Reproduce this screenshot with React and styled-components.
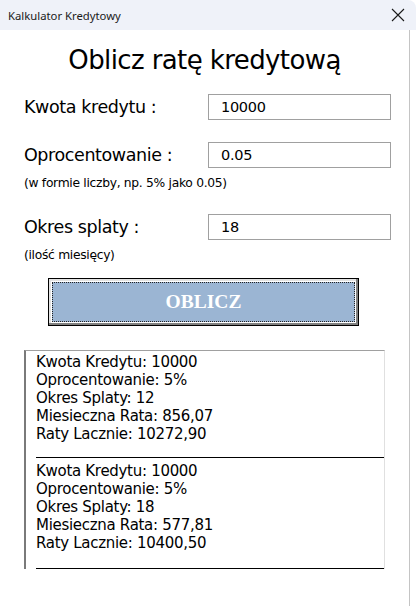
import React from 'react';
import styled, { createGlobalStyle } from 'styled-components';

const GlobalStyle = createGlobalStyle`
  html, body {
    margin: 0;
    padding: 0;
    background: #ffffff;
  }
  * {
    box-sizing: border-box;
  }
`;

const results = [
  { kwota: '10000', procent: '5%', okres: '12', rata: '856,07', lacznie: '10272,90' },
  { kwota: '10000', procent: '5%', okres: '18', rata: '577,81', lacznie: '10400,50' },
];

function App() {
  return (
    <>
      <GlobalStyle />
      <Window>
        <TitleBar>
          <TitleText>Kalkulator Kredytowy</TitleText>
          <CloseButton aria-label="close">
            <svg width="14" height="14" viewBox="0 0 14 14">
              <path d="M1 1 L13 13 M13 1 L1 13" stroke="#1a1a1a" strokeWidth="1.1" fill="none" />
            </svg>
          </CloseButton>
        </TitleBar>
        <Form>
          <Heading>Oblicz ratę kredytową</Heading>

          <Row $top={17}>
            <Label>Kwota kredytu :</Label>
            <Field defaultValue="10000" />
          </Row>

          <Row $top={22}>
            <Label>Oprocentowanie :</Label>
            <Field defaultValue="0.05" />
          </Row>
          <Hint>(w formie liczby, np. 5% jako 0.05)</Hint>

          <Row $top={23}>
            <Label>Okres splaty :</Label>
            <Field defaultValue="18" />
          </Row>
          <Hint>(ilość miesięcy)</Hint>

          <CalcButton>
            <CalcInner>OBLICZ</CalcInner>
          </CalcButton>

          <Results>
            {results.map((r, i) => (
              <Block key={i}>
                <Line>Kwota Kredytu: {r.kwota}</Line>
                <Line>Oprocentowanie: {r.procent}</Line>
                <Line>Okres Splaty: {r.okres}</Line>
                <Line>Miesieczna Rata: {r.rata}</Line>
                <Line>Raty Lacznie: {r.lacznie}</Line>
              </Block>
            ))}
          </Results>
        </Form>
      </Window>
    </>
  );
}

const Window = styled.div`
  width: 416px;
  height: 606px;
  background: #ffffff;
  display: flex;
  flex-direction: column;
  overflow: hidden;
`;

const TitleBar = styled.div`
  height: 30px;
  background: #eff2f9;
  border-top-right-radius: 8px;
  display: flex;
  align-items: center;
  justify-content: space-between;
  padding: 0 10px 0 8px;
`;

const TitleText = styled.span`
  font-family: "Noto Sans", "Open Sans", sans-serif;
  font-size: 11.3px;
  color: #1a1a1a;
`;

const CloseButton = styled.div`
  width: 16px;
  height: 16px;
  display: flex;
  align-items: center;
  justify-content: center;
`;

const Form = styled.div`
  flex: 1;
  width: 410px;
  border-right: 1px solid #c4c4c4;
  display: flex;
  flex-direction: column;
  padding: 13px 0 0 24px;
  font-family: "DejaVu Sans", Verdana, sans-serif;
  color: #000000;
`;

const Heading = styled.h1`
  margin: 0 0 0 -24px;
  font-family: "DejaVu Sans", Verdana, sans-serif;
  font-weight: normal;
  font-size: 26px;
  line-height: 34px;
  letter-spacing: -0.6px;
  text-align: center;
`;

const Row = styled.div`
  display: grid;
  grid-template-columns: 184px 183px;
  align-items: center;
  margin-top: ${(p) => p.$top}px;
`;

const Label = styled.span`
  font-size: 17.5px;
  letter-spacing: -0.4px;
`;

const Field = styled.input`
  width: 183px;
  height: 26px;
  border: 1px solid #a0a0a0;
  padding: 0 0 0 12px;
  font-family: "DejaVu Sans", Verdana, sans-serif;
  font-size: 14.5px;
  letter-spacing: -0.3px;
  color: #000000;
  outline: none;
`;

const Hint = styled.div`
  margin-top: 7px;
  font-size: 12.3px;
  line-height: 16px;
  letter-spacing: -0.3px;
`;

const CalcButton = styled.button`
  margin: 15px 0 0 24px;
  width: 311px;
  height: 48px;
  border: 1px solid #000000;
  background: #ffffff;
  box-shadow: inset -2px -2px 0 #808080, inset 2px 2px 0 #e3e3e3;
  display: flex;
  padding: 3px;
  cursor: pointer;
`;

const CalcInner = styled.span`
  flex: 1;
  display: flex;
  align-items: center;
  justify-content: center;
  background: #9bb5d3;
  border: 1px dotted #222222;
  color: #ffffff;
  font-family: "Liberation Serif", "Times New Roman", serif;
  font-weight: bold;
  font-size: 19.5px;
`;

const Results = styled.div`
  margin-top: 24px;
  width: 361px;
  height: 219px;
  border-top: 1px solid #a0a0a0;
  border-left: 2px solid #7a7a7a;
  border-right: 1px solid #e0e0e0;
  padding-left: 10px;
  overflow: hidden;
`;

const Block = styled.div`
  display: flex;
  flex-direction: column;
  padding-top: 2px;
  padding-bottom: 14px;
  margin-bottom: 2px;
  border-bottom: 1px solid #000000;

  & + & {
    padding-bottom: 16px;
  }
`;

const Line = styled.div`
  font-size: 15px;
  line-height: 18px;
  letter-spacing: -0.3px;
`;

export default App;
